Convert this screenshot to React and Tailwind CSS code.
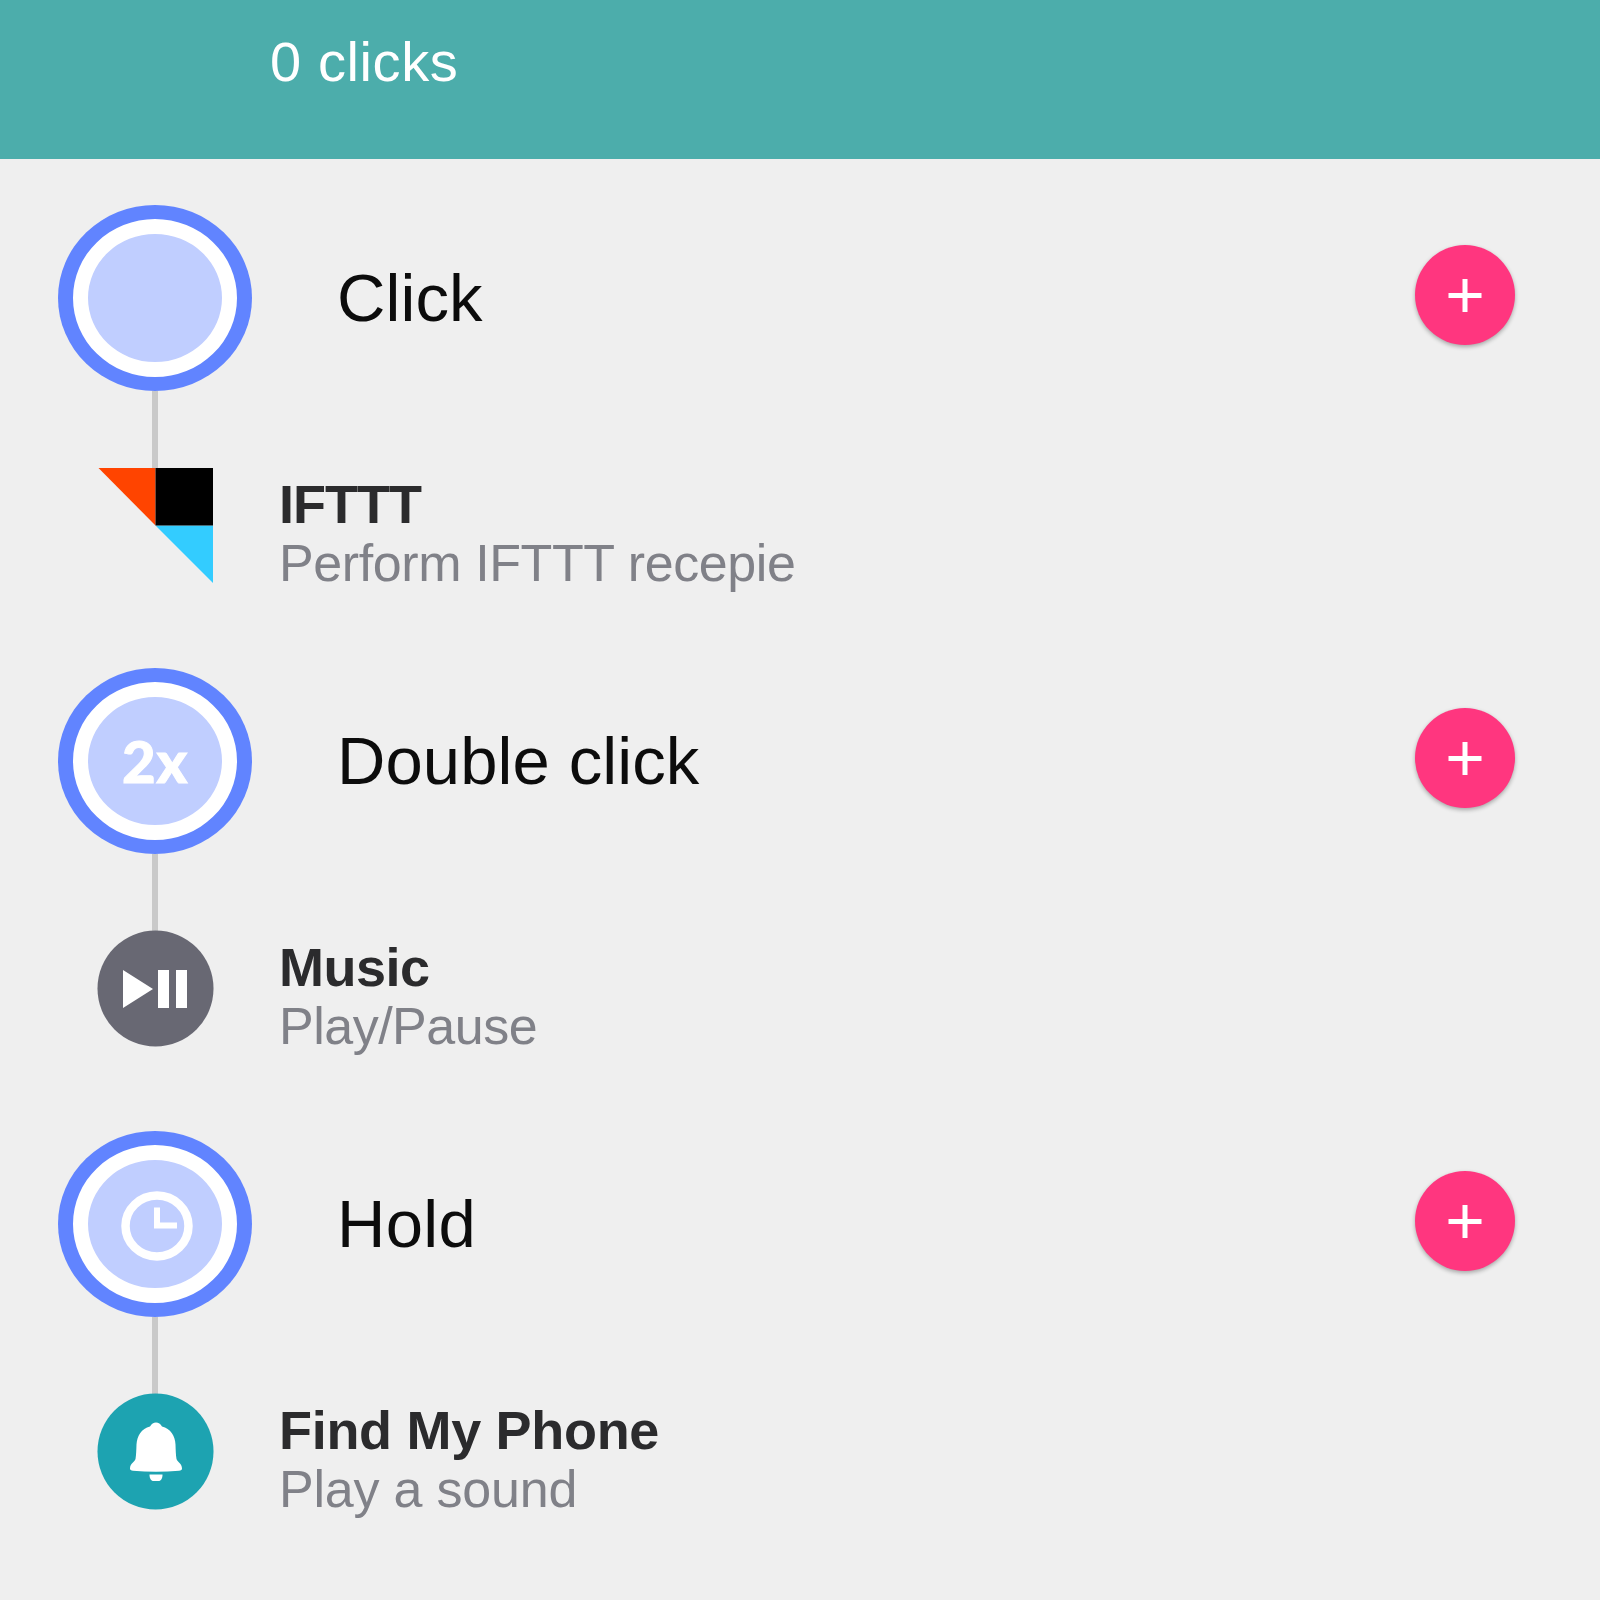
const triggers = [
  {
    name: "Click",
    nameSpacing: "tracking-[0.1px]",
    symbol: null,
    icon: <IftttIcon />,
    title: "IFTTT",
    titleSpacing: "tracking-[-1px]",
    detail: "Perform IFTTT recepie",
    detailSpacing: "tracking-[-0.4px]",
  },
  {
    name: "Double click",
    nameSpacing: "tracking-[0.1px]",
    symbol: (
      <span className="font-[Lato] text-[58px] leading-none font-black tracking-[0.8px] text-white [-webkit-text-stroke:1px_white]">
        2x
      </span>
    ),
    icon: <PlayPauseIcon />,
    title: "Music",
    titleSpacing: "tracking-[-0.5px]",
    detail: "Play/Pause",
    detailSpacing: "tracking-[-0.5px]",
  },
  {
    name: "Hold",
    nameSpacing: "tracking-[0.3px]",
    symbol: <ClockIcon />,
    icon: <BellIcon />,
    title: "Find My Phone",
    titleSpacing: "tracking-[-0.3px]",
    detail: "Play a sound",
    detailSpacing: "tracking-[-0.2px]",
  },
];

export default function App() {
  return (
    <div className="h-[1600px] w-[1600px] overflow-hidden bg-[#efefef] font-['Liberation_Sans',Arial,sans-serif]">
      <header className="h-[159px] bg-[#4cadab] pt-[32px] pl-[270px]">
        <p className="text-[56px] leading-[60px] tracking-[0.6px] text-white">0 clicks</p>
      </header>

      <main className="pt-[46px]">
        {triggers.map((t) => (
          <Trigger key={t.name} {...t} />
        ))}
      </main>
    </div>
  );
}

function Trigger({ name, nameSpacing, symbol, icon, title, titleSpacing, detail, detailSpacing }) {
  return (
    <section className="h-[463.2px] pr-[85px] pl-[58px]">
      <div className="flex h-[186px] items-center">
        <div className="h-[186px] w-[194px] shrink-0 rounded-[50%] bg-[#6184ff] px-[15px] py-[14px]">
          <div className="flex h-full w-full items-center justify-center rounded-[50%] border-[15px] border-white bg-[#c0ceff]">
            {symbol}
          </div>
        </div>
        <h2 className={`ml-[85px] flex-1 text-[67px] leading-[80px] text-[#0c0c0c] ${nameSpacing}`}>{name}</h2>
        <AddButton />
      </div>

      <div className="ml-[94px] h-[77px] w-[6px] bg-[#c9c9c9]" />

      <div className="-mt-px flex pl-[39px]">
        <div className="h-[117px] w-[117px] shrink-0">{icon}</div>
        <div className="ml-[65px] pt-[8px]">
          <h3 className={`text-[54px] leading-[59px] font-bold text-[#2b2b2d] ${titleSpacing}`}>{title}</h3>
          <p className={`text-[52px] leading-[58px] text-[#808188] ${detailSpacing}`}>{detail}</p>
        </div>
      </div>
    </section>
  );
}

function AddButton() {
  return (
    <button className="mb-[6px] flex h-[100px] w-[100px] items-center justify-center rounded-full bg-[#ff367f] shadow-[0_2px_4px_rgba(0,0,0,0.3)]">
      <svg viewBox="0 0 34 34" className="h-[34px] w-[34px]">
        <path d="M0.5 17.5h33M17 1v33" stroke="#fff" strokeWidth="5" />
      </svg>
    </button>
  );
}

function ClockIcon() {
  return (
    <svg viewBox="0 0 74 74" className="mt-[3px] ml-[3px] h-[74px] w-[74px]">
      <ellipse cx="37" cy="37" rx="31.5" ry="30.5" fill="none" stroke="#fff" strokeWidth="8.5" />
      <path d="M37 18.5v18h20" fill="none" stroke="#fff" strokeWidth="6" />
    </svg>
  );
}

function IftttIcon() {
  return (
    <svg viewBox="0 0 117 117" className="h-full w-full">
      <path d="M1.5 1h57v57.5z" fill="#ff4400" />
      <path d="M58.5 58.5H116V116z" fill="#33ccff" />
      <path d="M58.5 1H116v57.5H58.5z" fill="#000" />
    </svg>
  );
}

function PlayPauseIcon() {
  return (
    <svg viewBox="0 0 117 117" className="h-full w-full">
      <circle cx="58.5" cy="58.5" r="58" fill="#686873" />
      <path d="M26 40l30 19-30 19zM61 40h11v38H61zM79 40h11v38H79z" fill="#fff" />
    </svg>
  );
}

function BellIcon() {
  return (
    <svg viewBox="0 0 117 117" className="h-full w-full">
      <circle cx="58.5" cy="58.5" r="58" fill="#1da3b1" />
      <path
        d="M59 29.5c2.500 0 4.500 1.500 6 4 8.500 2 13 9 13.500 18 .2 6 .3 10 1 14.500.8 3 5.500 4.500 5.500 9.500 0 1.500-1 2-3 2.200-15 1.500-31 1.500-46 0-2-.2-3-.7-3-2.200 0-5 4.700-6.500 5.500-9.500.7-4.500.8-8.500 1-14.500.5-9 5-16 13.500-18 1.500-2.500 3.500-4 6-4z"
        fill="#fff"
      />
      <path d="M52.500 81.500h13c0 4-1.500 6.500-4 6.500h-5c-2.500 0-4-2.500-4-6.500z" fill="#fff" />
    </svg>
  );
}
